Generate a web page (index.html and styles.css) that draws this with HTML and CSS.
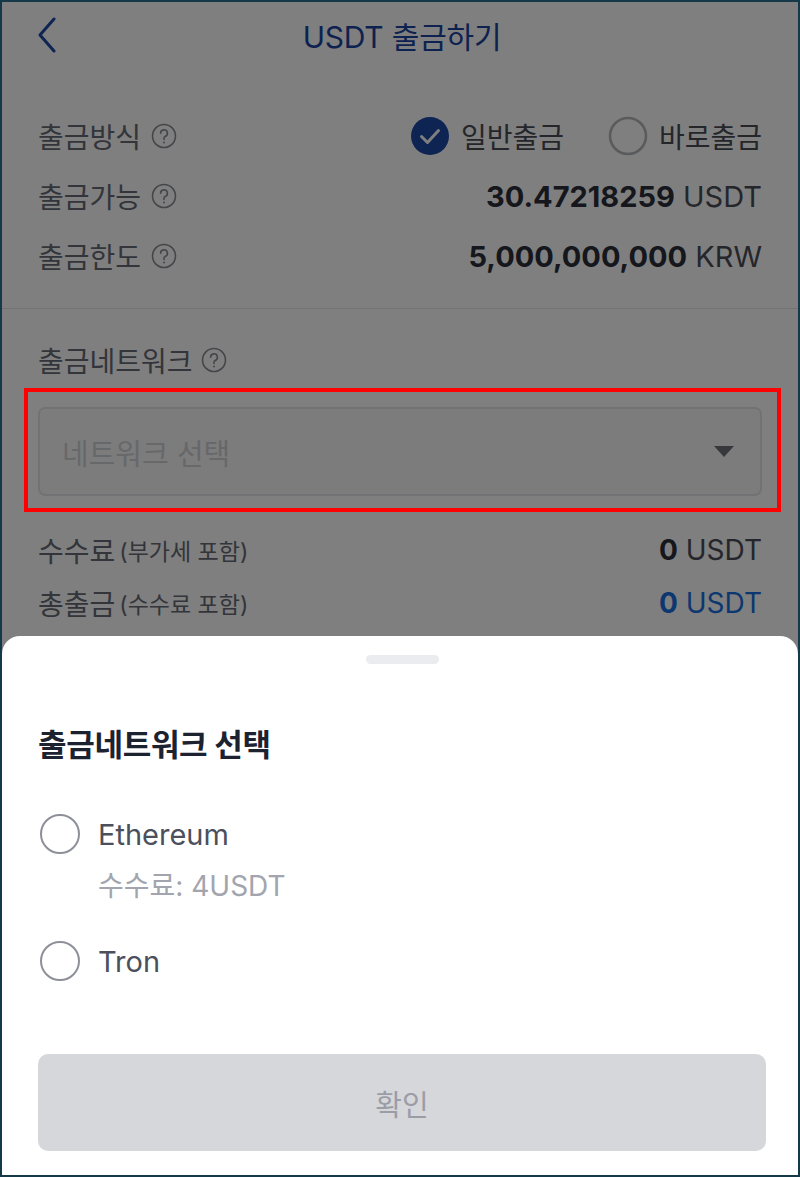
FILE: index.html
```html
<!DOCTYPE html>
<html lang="ko">
<head>
  <meta charset="UTF-8" />
  <meta name="viewport" content="width=device-width, initial-scale=1" />
  <title>USDT 출금하기</title>
  <link rel="stylesheet" href="styles.css">
</head>
<body>
  <div class="screen">

    <header class="topbar">
      <svg class="back" width="22" height="36" viewBox="0 0 22 36">
        <path d="M18 2 L4 18 L18 34" fill="none" stroke="#1c48a6" stroke-width="3" stroke-linecap="round" stroke-linejoin="round"/>
      </svg>
      <h1>USDT 출금하기</h1>
    </header>

    <section class="summary">
      <div class="row">
        <span class="label">출금방식 <svg class="help" viewBox="0 0 26 26"><circle cx="13" cy="13" r="11.5" fill="none" stroke="#8a8c93" stroke-width="1.6"/><path d="M9.6 10.2 a3.4 3.4 0 1 1 4.6 3.2 c-1 .4-1.2 1-1.2 2v1" fill="none" stroke="#8a8c93" stroke-width="1.6" stroke-linecap="round"/><circle cx="13" cy="19.6" r="1" fill="#8a8c93"/></svg></span>
        <div class="methods">
          <span class="method"><svg class="radio" viewBox="0 0 40 40"><circle cx="20" cy="20" r="19" fill="#1c48a6"/><path d="M11.5 20.5 l6 6 l11-12" fill="none" stroke="#fff" stroke-width="3" stroke-linecap="round" stroke-linejoin="round"/></svg>일반출금</span>
          <span class="method"><svg class="radio" viewBox="0 0 40 40"><circle cx="20" cy="20" r="18" fill="none" stroke="#b4b6bb" stroke-width="2.6"/></svg>바로출금</span>
        </div>
      </div>
      <div class="row">
        <span class="label">출금가능 <svg class="help" viewBox="0 0 26 26"><circle cx="13" cy="13" r="11.5" fill="none" stroke="#8a8c93" stroke-width="1.6"/><path d="M9.6 10.2 a3.4 3.4 0 1 1 4.6 3.2 c-1 .4-1.2 1-1.2 2v1" fill="none" stroke="#8a8c93" stroke-width="1.6" stroke-linecap="round"/><circle cx="13" cy="19.6" r="1" fill="#8a8c93"/></svg></span>
        <span class="amount"><b>30.47218259</b> USDT</span>
      </div>
      <div class="row">
        <span class="label">출금한도 <svg class="help" viewBox="0 0 26 26"><circle cx="13" cy="13" r="11.5" fill="none" stroke="#8a8c93" stroke-width="1.6"/><path d="M9.6 10.2 a3.4 3.4 0 1 1 4.6 3.2 c-1 .4-1.2 1-1.2 2v1" fill="none" stroke="#8a8c93" stroke-width="1.6" stroke-linecap="round"/><circle cx="13" cy="19.6" r="1" fill="#8a8c93"/></svg></span>
        <span class="amount"><b>5,000,000,000</b> KRW</span>
      </div>
    </section>

    <section class="network">
      <div class="label net-label">출금네트워크 <svg class="help" viewBox="0 0 26 26"><circle cx="13" cy="13" r="11.5" fill="none" stroke="#8a8c93" stroke-width="1.6"/><path d="M9.6 10.2 a3.4 3.4 0 1 1 4.6 3.2 c-1 .4-1.2 1-1.2 2v1" fill="none" stroke="#8a8c93" stroke-width="1.6" stroke-linecap="round"/><circle cx="13" cy="19.6" r="1" fill="#8a8c93"/></svg></div>
      <div class="select">
        <span>네트워크 선택</span>
        <svg width="20" height="11" viewBox="0 0 20 11"><path d="M0 0 H20 L10 11 Z" fill="#6f7178"/></svg>
      </div>
      <div class="fees">
        <div class="fee-row">
          <span class="label">수수료 <small>(부가세 포함)</small></span>
          <span class="amount"><b>0</b> USDT</span>
        </div>
        <div class="fee-row">
          <span class="label">총출금 <small>(수수료 포함)</small></span>
          <span class="amount total"><b>0</b> USDT</span>
        </div>
      </div>
    </section>

    <div class="dim"></div>
    <div class="mark"></div>

    <div class="sheet">
      <div class="handle"></div>
      <h2>출금네트워크 선택</h2>
      <label class="option">
        <span class="ring"></span>
        <span>Ethereum</span>
      </label>
      <p class="option-fee">수수료: 4USDT</p>
      <label class="option tron">
        <span class="ring"></span>
        <span>Tron</span>
      </label>
      <button class="confirm" disabled>확인</button>
    </div>

  </div>
</body>
</html>
```

FILE: styles.css
```css
* {
  box-sizing: border-box;
}

body {
  margin: 0;
  background: #fff;
  font-family: Inter, 'Noto Sans CJK KR', sans-serif;
}

.screen {
  position: relative;
  width: 800px;
  height: 1177px;
  border: 2px solid #16394a;
  overflow: hidden;
  background: #fff;
}

/* header */
.topbar {
  height: 66px;
  display: flex;
  align-items: center;
  justify-content: center;
  position: relative;
}

.topbar .back {
  position: absolute;
  left: 34px;
  top: 15px;
}

.topbar h1 {
  margin: 0 0 0 4px;
  font-size: 30px;
  font-weight: 400;
  color: #1a44a0;
  letter-spacing: -0.2px;
}

/* summary */
.summary {
  padding: 38px 36px 22px 36px;
  border-bottom: 1px solid #e6e7ea;
}

.row {
  height: 60px;
  display: flex;
  align-items: center;
  justify-content: space-between;
}

.label {
  display: flex;
  align-items: center;
  gap: 10px;
  font-size: 28px;
  color: #666a74;
}

.help {
  width: 26px;
  height: 26px;
}

.methods {
  display: flex;
  gap: 44px;
}

.method {
  display: flex;
  align-items: center;
  gap: 11px;
  font-size: 28px;
  color: #4a4d55;
}

.radio {
  width: 40px;
  height: 40px;
}

.amount {
  font-size: 29px;
  color: #4a4d56;
}

.amount b {
  color: #2a2e38;
  font-weight: 700;
}

.amount.total,
.amount.total b {
  color: #1a6fe0;
}

/* network select */
.network {
  padding: 31px 36px 0 36px;
}

.net-label {
  height: 40px;
  gap: 8px;
}

.select {
  margin-top: 27px;
  height: 89px;
  border: 2px solid #e4e5e8;
  border-radius: 7px;
  background: #f9f9fa;
  display: flex;
  align-items: center;
  justify-content: space-between;
  padding: 0 26px 0 22px;
  font-size: 29px;
  color: #cfd0d4;
}

.fees {
  margin-top: 27px;
}

.fee-row {
  height: 53px;
  display: flex;
  align-items: center;
  justify-content: space-between;
}

.fee-row small {
  font-size: 23px;
  margin-left: -6px;
}

.fee-row .amount {
  font-size: 28px;
}

/* sheet over the page */
.dim {
  position: absolute;
  inset: 0;
  background: rgba(0, 0, 0, 0.5);
}

.mark {
  position: absolute;
  left: 22px;
  top: 386px;
  width: 757px;
  height: 124px;
  border: 4px solid #ff0000;
}

.sheet {
  position: absolute;
  left: 0;
  right: 0;
  bottom: 0;
  height: 539px;
  background: #fff;
  border-radius: 18px 18px 0 0;
  padding: 0 32px 0 36px;
}

.handle {
  width: 73px;
  height: 9px;
  margin: 19px auto 0 auto;
  border-radius: 5px;
  background: #ebecef;
}

.sheet h2 {
  margin: 61px 0 0 0;
  height: 40px;
  line-height: 40px;
  font-size: 31px;
  font-weight: 700;
  color: #1d2231;
  letter-spacing: -0.3px;
}

.option {
  display: flex;
  align-items: center;
  gap: 18px;
  height: 40px;
  margin-top: 49px;
  padding-left: 2px;
  font-size: 29px;
  color: #4b505c;
}

.ring {
  width: 40px;
  height: 40px;
  border: 2.5px solid #8e9099;
  border-radius: 50%;
}

.option-fee {
  margin: 14px 0 0 60px;
  height: 36px;
  line-height: 36px;
  font-size: 28px;
  color: #a2a5ad;
}

.option.tron {
  margin-top: 37px;
}

.confirm {
  display: block;
  width: 728px;
  height: 97px;
  margin-top: 73px;
  border: none;
  border-radius: 10px;
  background: #d6d7db;
  color: #9b9da6;
  font-family: inherit;
  font-size: 29px;
}
```
